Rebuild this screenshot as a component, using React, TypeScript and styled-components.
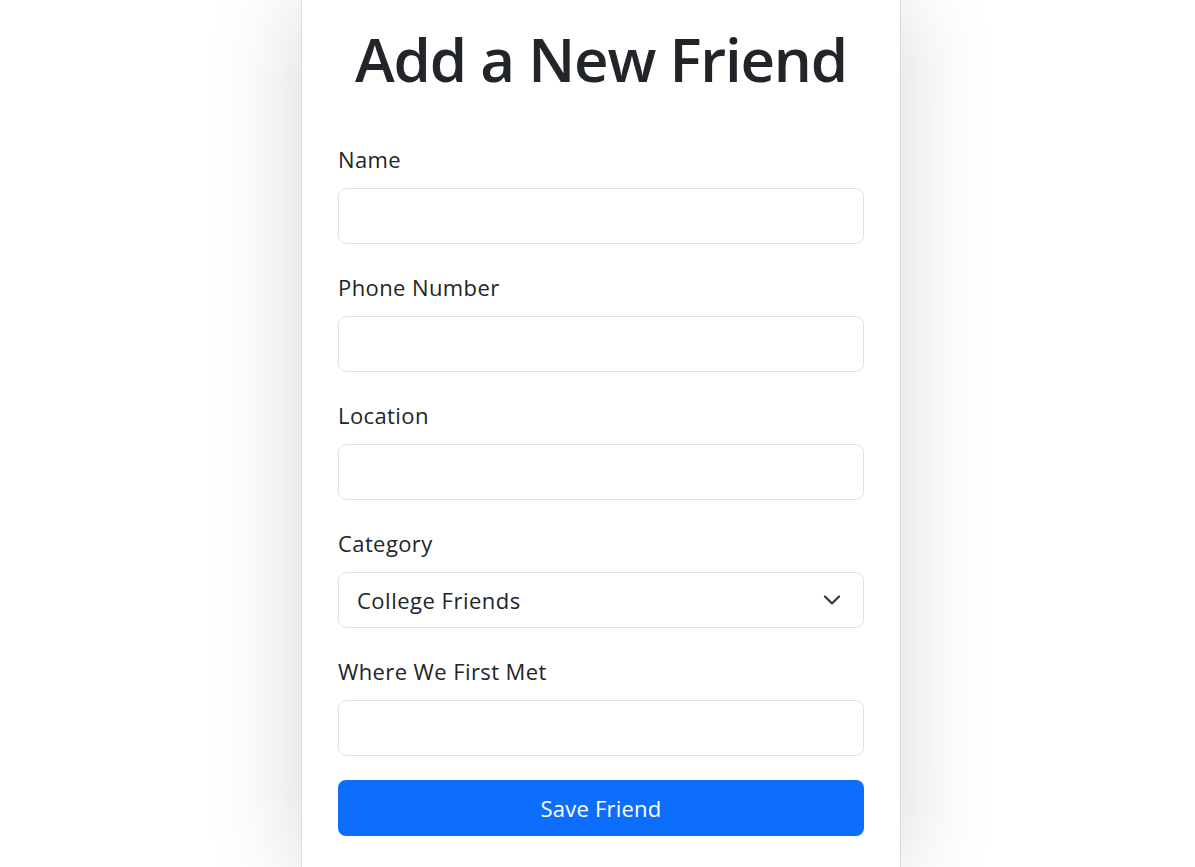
import React from "react";
import styled, { createGlobalStyle } from "styled-components";

const Global = createGlobalStyle`
  html, body { margin: 0; padding: 0; background: #ffffff; }
  body { font-family: "Open Sans", "Noto Sans", Arial, sans-serif; color: #212529; overflow: hidden; }
  * { box-sizing: border-box; }
`;

const Page = styled.div`
  display: flex;
  justify-content: center;
  padding-left: 7px;
  min-height: 867px;
`;

const Card = styled.div`
  width: 600px;
  background: #fff;
  border: 1px solid #dcdcdc;
  border-top: none;
  box-shadow: 0 0 90px rgba(0, 0, 0, 0.16);
  padding: 22px 36px 36px;
`;

const Title = styled.h1`
  margin: 0 0 47px;
  text-align: center;
  font-size: 60px;
  font-weight: 600;
  line-height: 75px;
  color: #212529;
  letter-spacing: -1.2px;
`;

const Group = styled.div<{ $last?: boolean }>`
  display: flex;
  flex-direction: column;
  margin-bottom: ${(p) => (p.$last ? "24px" : "28px")};
`;

const Label = styled.label`
  font-size: 22px;
  line-height: 31px;
  margin-bottom: 13px;
  letter-spacing: 0.4px;
  color: #212529;
`;

const Input = styled.input`
  height: 56px;
  width: 100%;
  border: 1px solid #dee2e6;
  border-radius: 8px;
  padding: 0 18px;
  font-family: inherit;
  font-size: 22px;
  color: #212529;
  background: #fff;
  outline: none;
`;

const SelectBox = styled.div`
  height: 56px;
  border: 1px solid #dee2e6;
  border-radius: 8px;
  display: flex;
  align-items: center;
  justify-content: space-between;
  padding: 0 22px 0 18px;
  font-size: 22px;
  letter-spacing: 0.5px;
  color: #212529;
`;

const Chevron = styled.svg`
  width: 18px;
  height: 12px;
`;

const Button = styled.button`
  width: 100%;
  height: 56px;
  border: none;
  border-radius: 8px;
  background: #0d6efd;
  color: #fff;
  font-family: inherit;
  font-size: 22px;
  letter-spacing: 0.2px;
  cursor: pointer;
`;

const fields = ["Name", "Phone Number", "Location"];

export default function App() {
  return (
    <>
      <Global />
      <Page>
        <Card>
          <Title>Add a New Friend</Title>
          {fields.map((f) => (
            <Group key={f}>
              <Label>{f}</Label>
              <Input type="text" />
            </Group>
          ))}
          <Group>
            <Label>Category</Label>
            <SelectBox>
              <span>College Friends</span>
              <Chevron viewBox="0 0 18 12">
                <path d="M2 2.5 L9 9.5 L16 2.5" fill="none" stroke="#343a40" strokeWidth="2.2" strokeLinecap="round" strokeLinejoin="round" />
              </Chevron>
            </SelectBox>
          </Group>
          <Group $last>
            <Label>Where We First Met</Label>
            <Input type="text" />
          </Group>
          <Button>Save Friend</Button>
        </Card>
      </Page>
    </>
  );
}
